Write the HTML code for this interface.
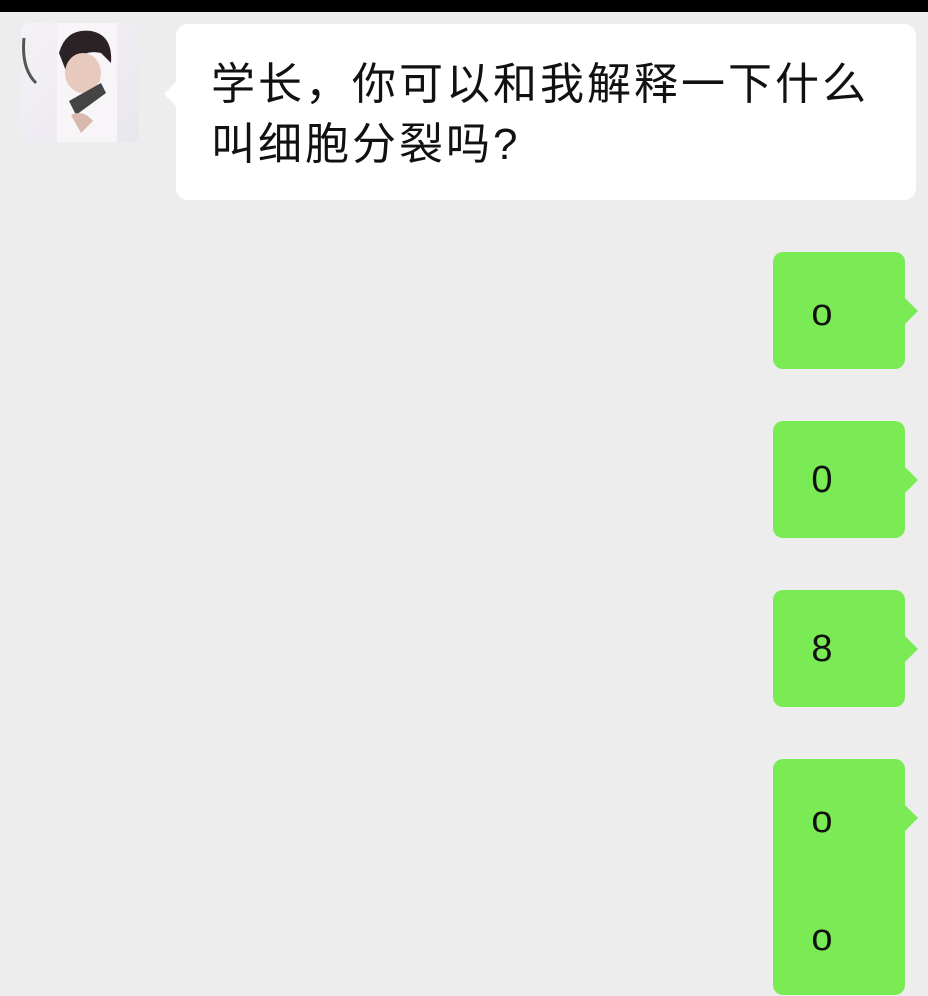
<!DOCTYPE html><html><head><meta charset="utf-8"><style>
body{margin:0;width:928px;height:996px;background:#ededed;position:relative;overflow:hidden;font-family:"Liberation Sans","Noto Sans CJK SC",sans-serif}
.top{position:absolute;left:0;top:0;width:928px;height:12px;background:#000}
.av{position:absolute;left:21px;top:23px;width:118px;height:119px;border-radius:8px;background:linear-gradient(135deg,#f4f2f6,#e9e6ee);overflow:hidden}
.wb{position:absolute;left:176px;top:24px;width:740px;height:176px;background:#fff;border-radius:12px}
.wb:before{content:"";position:absolute;left:-12px;top:58px;border:12px solid transparent;border-left:0;border-right-color:#fff}
.wb p{margin:0;position:absolute;left:35px;top:31px;font-size:44px;line-height:60px;color:#111;letter-spacing:3px;white-space:nowrap}
.g{position:absolute;left:773px;width:132px;background:#7aeb55;border-radius:10px;font-size:38px;color:#111;text-align:center}
.g:after{content:"";position:absolute;right:-13px;top:46px;border:13px solid transparent;border-right:0;border-left-color:#7aeb55}
.g span{position:absolute;left:0;width:98px;text-align:center}
</style></head><body>
<div class="top"></div>
<div class="av"><svg width="118" height="119"><rect x="36" y="0" width="60" height="119" fill="#f7f5f8"/><path d="M38 30 Q45 5 70 8 Q92 12 90 40 Q85 35 80 30 Q60 25 45 48Z" fill="#2a2224"/><ellipse cx="62" cy="50" rx="18" ry="20" fill="#e8c9bd"/><path d="M48 78 L80 60 L85 70 L55 92Z" fill="#444"/><path d="M50 92 Q62 86 72 98 L60 110Z" fill="#d9b8ae"/><path d="M3 15 Q0 45 15 60" stroke="#555" stroke-width="3" fill="none"/></svg></div>
<div class="wb"><p>学长，你可以和我解释一下什么<br>叫细胞分裂吗?</p></div>
<div class="g" style="top:252px;height:117px"><span style="top:40px">o</span></div>
<div class="g" style="top:421px;height:117px"><span style="top:38px">0</span></div>
<div class="g" style="top:590px;height:117px"><span style="top:38px">8</span></div>
<div class="g" style="top:759px;height:236px"><span style="top:40px">o</span><span style="top:158px">o</span></div>
</body></html>
